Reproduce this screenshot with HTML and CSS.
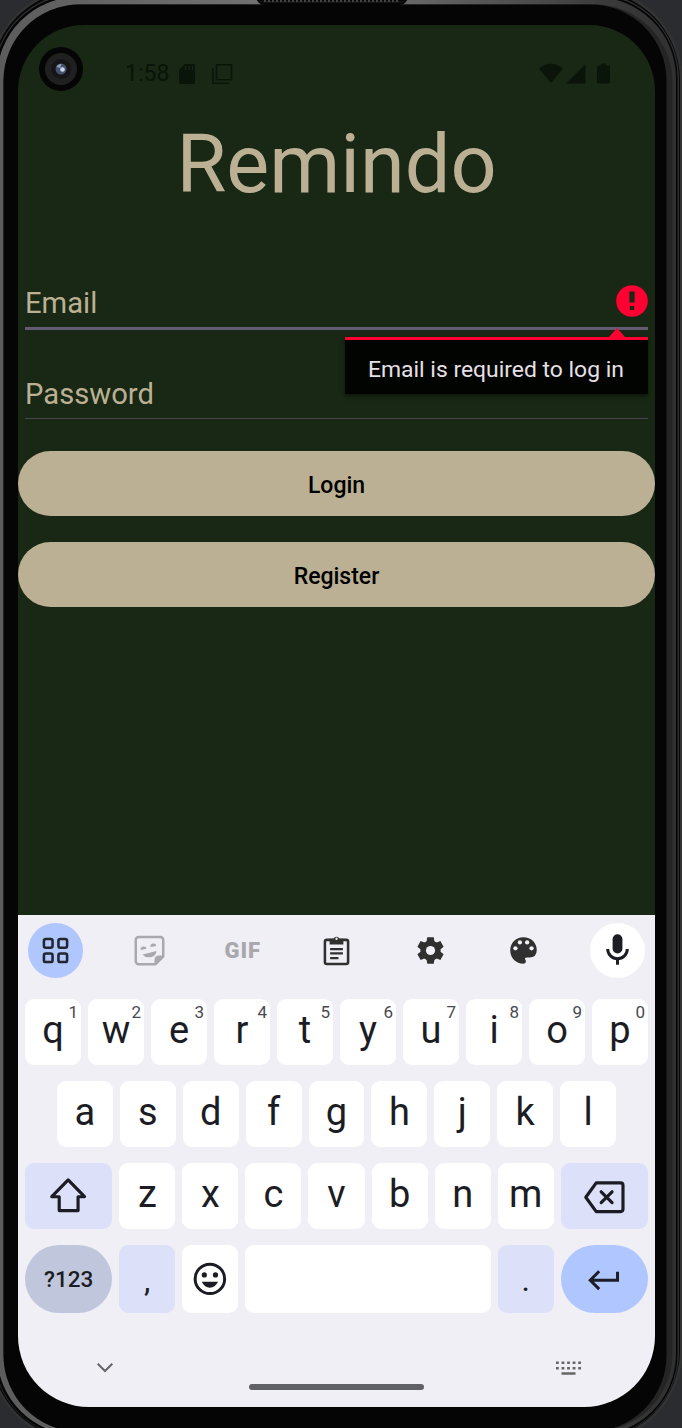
FILE: index.html
```html
<!DOCTYPE html>
<html lang="en">
<head>
<meta charset="utf-8">
<title>Remindo</title>
<link rel="stylesheet" href="styles.css">
</head>
<body>
<svg class="frame" viewBox="0 0 682 1428" aria-hidden="true">
  <defs>
    <linearGradient id="rim" x1="0" x2="1" y1="0" y2="0">
      <stop offset="0" stop-color="#5c5c5c"/><stop offset=".5" stop-color="#777"/><stop offset=".9" stop-color="#3a3a3a"/><stop offset="1" stop-color="#303030"/>
    </linearGradient>
  </defs>
  <rect x="-11" y="-13" width="693.5" height="1456" rx="93" fill="#333"/>
  <rect x="-9" y="-10" width="689" height="1450" rx="90" fill="#080808"/>
  <rect x="-7" y="-7" width="686" height="1445" rx="86" fill="#303030"/>
  <rect x="-5.500" y="-5" width="683" height="1442" rx="83" fill="#050505"/>
  <rect x="-3" y="-3" width="679" height="1438" rx="81" fill="url(#rim)"/>
  <rect x="3.500" y="4.500" width="669" height="1427" rx="78" fill="#252525"/>
  <rect x="3.500" y="4.500" width="663" height="1427" rx="76" fill="#050505"/>
  <path d="M258 0q2 4 8 4h132q6 0 8-4z" fill="#161616" stroke="#050505" stroke-width="2"/>
  <path d="M264 1h136" stroke="#444" stroke-width="2" stroke-dasharray="2 2"/>
</svg>
<main class="screen">
  <section class="app">
    <header class="status">
      <svg class="camera" viewBox="0 0 44 44"><circle cx="22" cy="22" r="22" fill="#050505"/><circle cx="22" cy="22" r="16" fill="#202021"/><circle cx="22" cy="22" r="10" fill="#151517"/><circle cx="22" cy="22" r="5.500" fill="#46506a"/><path d="M17.500 20a5 5 0 0 1 5-3l-1 4z" fill="#8e9db5"/><circle cx="23.500" cy="22.500" r="2.300" fill="#c8d8f0"/></svg>
      <span class="clock">1:58</span>
      <svg class="sd" viewBox="0 0 16 20"><path d="M6 0h8.500Q16 0 16 1.500v17q0 1.500-1.500 1.500h-13Q0 20 0 18.500V6z"/><path d="M6.500 2v4M10 2v4M13.500 2v4" stroke="#182814" stroke-width="1.300"/></svg>
      <svg class="windows" viewBox="0 0 21 20"><path d="M4.500.8h15v15h-15zM.8 4v15.200H17" fill="none" stroke="#0a1408" stroke-width="1.600"/></svg>
      <svg class="signals" viewBox="0 0 72 21"><path d="M0 5.500Q12-4 24 5.500L12 20zM27 20.500 46.500 1v19.500zM58 4q0-1.500 1.500-1.500H62V.500h5v2h2.500Q71 2.500 71 4v15q0 1.500-1.500 1.500h-10Q58 20.500 58 19z"/></svg>
    </header>
    <h1 class="title">Remindo</h1>
    <div class="field email">
      <span>Email</span>
      <svg class="error" viewBox="0 0 32 32"><circle cx="16" cy="16" r="15.800" fill="#ff0033"/><path d="M13.400 6.500h5.200v11h-5.200zM13.800 21h4.400v4h-4.400z" fill="#182814"/></svg>
      <div class="tooltip">Email is required to log in</div>
    </div>
    <div class="field password"><span>Password</span></div>
    <button class="action">Login</button>
    <button class="action">Register</button>
  </section>
  <section class="keyboard">
    <div class="toolbar">
      <div class="tool round blue"><svg viewBox="0 0 56 56" fill="none" stroke="#22272f" stroke-width="2.600"><rect x="16.200" y="16.300" width="8.800" height="8.800" rx="2"/><rect x="31" y="16.300" width="8.800" height="8.800" rx="2"/><rect x="16.200" y="31" width="8.800" height="8.800" rx="2"/><rect x="31" y="31" width="8.800" height="8.800" rx="2"/></svg></div>
      <div class="tool"><svg viewBox="0 0 56 56"><path d="M17 14.200h22a3 3 0 0 1 3 3V34l-8 8H17a3 3 0 0 1-3-3V17.200a3 3 0 0 1 3-3z" fill="none" stroke="#a9a8ad" stroke-width="2.500"/><path d="M42 33h-4q-5 0-5 5v4z" fill="#a9a8ad"/><path d="M19 27.500a3 3 0 0 1 6-1.200zM29 24.500a3 3 0 0 1 6-1.200zM21 32l14-3.500q0 5-5.500 6.300-6 .7-8.500-2.800z" fill="#a9a8ad"/></svg></div>
      <div class="tool gif">GIF</div>
      <div class="tool"><svg viewBox="0 0 56 56"><rect x="16.200" y="17.200" width="23.600" height="24.500" rx="2" fill="none" stroke="#303030" stroke-width="2.600"/><path d="M21 16h4a3.200 3.200 0 0 1 6 0h4v6H21z" fill="#303030"/><circle cx="28" cy="16" r="1.200" fill="#f0eff6"/><path d="M21.500 26.500h13M21.500 31h13M21.500 35.800h8.500" stroke="#303030" stroke-width="2.300"/></svg></div>
      <div class="tool"><svg viewBox="0 0 56 56"><g fill="#303030"><circle cx="28" cy="28" r="10.300"/><path d="M24.700 14.500h6.600l1 6h-8.600zM24.700 41.500h6.600l1-6h-8.600z"/><path d="M24.700 14.500h6.600l1 6h-8.600zM24.700 41.500h6.600l1-6h-8.600z" transform="rotate(60 28 28)"/><path d="M24.700 14.500h6.600l1 6h-8.600zM24.700 41.500h6.600l1-6h-8.600z" transform="rotate(120 28 28)"/></g><circle cx="28" cy="28" r="4.700" fill="#f0eff6"/></svg></div>
      <div class="tool"><svg viewBox="0 0 56 56"><path d="M28 14.500C20 14.500 14.500 20.500 14.500 28S20.500 41.500 28 41.500q2.500 0 2.500-2.500 0-.8-.7-1.700-1-2.300 1.700-2.300H34q7.500 0 7.500-7.500C41.500 20 35.500 14.500 28 14.500z" fill="#303030"/><g fill="#f0eff6"><circle cx="19.800" cy="25.800" r="2.200"/><circle cx="24.300" cy="19.800" r="2.200"/><circle cx="31.700" cy="19.800" r="2.200"/><circle cx="36.200" cy="25.800" r="2.200"/></g></svg></div>
      <div class="tool round white"><svg viewBox="0 0 56 56"><rect x="23" y="11.500" width="10" height="19.500" rx="5" fill="#1c1d24"/><path d="M18 26.500a10 9.800 0 0 0 20 0M28 36v6.500" fill="none" stroke="#1c1d24" stroke-width="3"/></svg></div>
    </div>
    <div class="row"><div class="key">q<sup>1</sup></div><div class="key">w<sup>2</sup></div><div class="key">e<sup>3</sup></div><div class="key">r<sup>4</sup></div><div class="key">t<sup>5</sup></div><div class="key">y<sup>6</sup></div><div class="key">u<sup>7</sup></div><div class="key">i<sup>8</sup></div><div class="key">o<sup>9</sup></div><div class="key">p<sup>0</sup></div></div>
    <div class="row middle"><div class="key">a</div><div class="key">s</div><div class="key">d</div><div class="key">f</div><div class="key">g</div><div class="key">h</div><div class="key">j</div><div class="key">k</div><div class="key">l</div></div>
    <div class="row">
      <div class="key wide pale"><svg viewBox="0 0 88 66" fill="none" stroke="#1c1d24" stroke-width="3.200" stroke-linejoin="round"><path d="M43.500 17 60 34h-6.500v14h-19V34H27z"/></svg></div>
      <div class="key">z</div><div class="key">x</div><div class="key">c</div><div class="key">v</div><div class="key">b</div><div class="key">n</div><div class="key">m</div>
      <div class="key wide pale"><svg viewBox="0 0 88 66" fill="none" stroke="#1c1d24" stroke-width="3.200" stroke-linejoin="round" stroke-linecap="round"><path d="M35.500 20H60q2.500 0 2.500 2.500v24q0 2.500-2.500 2.500H35.500L25 34.500zM40.500 29l11 11m0-11-11 11"/></svg></div>
    </div>
    <div class="row last">
      <div class="key wide symbols">?123</div>
      <div class="key pale mark">,</div>
      <div class="key"><svg viewBox="0 0 56 68"><circle cx="28" cy="34" r="14.800" fill="none" stroke="#1c1d24" stroke-width="3"/><circle cx="22.400" cy="30" r="2.600" fill="#1c1d24"/><circle cx="33.600" cy="30" r="2.600" fill="#1c1d24"/><path d="M19.800 37h16.400q-3 6-8.200 6t-8.200-6z" fill="#1c1d24"/></svg></div>
      <div class="key space"></div>
      <div class="key pale mark">.</div>
      <div class="key wide enter"><svg viewBox="0 0 88 68" fill="none" stroke="#1c1d24" stroke-width="3"><path d="M57 27v8.500H30M38.500 26.500l-9 9 9 9"/></svg></div>
    </div>
    <footer class="nav">
      <svg class="down" viewBox="0 0 16 10" fill="none" stroke="#666" stroke-width="2"><path d="M.700.700 8 8 15.300.700"/></svg>
      <i class="handle"></i>
      <svg class="switch" viewBox="0 0 25 14" fill="none" stroke="#666"><path d="M0 1.700h25M0 7.200h25" stroke-width="2.600" stroke-dasharray="2.800 2.750"/><path d="M5.500 12.500h14" stroke-width="2.400"/></svg>
    </footer>
  </section>
</main>
</body>
</html>
```

FILE: styles.css
```css
* { box-sizing: border-box; }
html { background: #2b2c30; }
body {
  margin: 0;
  width: 682px;
  height: 1428px;
  padding: 25px 27px 21px 18px;
  overflow: hidden;
  font-family: Roboto, "Liberation Sans", sans-serif;
}
svg { display: block; }
.frame { position: absolute; left: 0; top: 0; width: 682px; height: 1428px; z-index: -1; }
.screen {
  display: flex;
  flex-direction: column;
  height: 1382px;
  overflow: hidden;
  border-radius: 66px 66px 71px 71px;
}
.app { height: 890px; background: #182814; }

.status { display: flex; height: 92px; padding: 22px 44px 0 21px; align-items: flex-start; color: #0a1408; fill: #0a1408; }
.camera { width: 44px; height: 44px; }
.clock { margin-left: 42px; width: 54px; font-size: 23px; line-height: 54px; height: 50px; }
.sd { width: 16px; height: 20px; margin-top: 17px; }
.windows { width: 21px; height: 20px; margin: 17px 0 0 17px; }
.signals { width: 72px; height: 21px; margin: 16px 0 0 auto; }

.title { margin: 0; height: 152px; text-align: center; font-size: 81px; line-height: 95px; font-weight: 400; color: #bbb094; }
.field { position: relative; display: flex; justify-content: space-between; margin: 0 7px; color: #bbb094; font-size: 29.200px; line-height: 36px; }
.email { height: 61px; padding-top: 16px; border-bottom: 3px solid #625b71; }
.password { height: 89px; padding-top: 46px; margin-bottom: 32px; border-bottom: 1px solid #49454f; }
.error { width: 32px; height: 32px; }
.tooltip {
  position: absolute;
  z-index: 1;
  top: 68px;
  right: 0;
  width: 303px;
  height: 57px;
  padding: 14px 0 0 23px;
  border-top: 3px solid #ff0033;
  background: #020402;
  color: #e6e0e6;
  font-size: 22.900px;
  line-height: 32px;
  white-space: nowrap;
  box-shadow: 0 2px 4px rgba(0, 0, 0, .5);
}
.tooltip::before { content: ""; position: absolute; right: 22px; top: -12px; border: solid transparent; border-width: 0 9px 10px; border-bottom-color: #ff0033; }
.action { display: block; width: 100%; height: 65px; margin: 0 0 26px; padding: 4px 0 0; border: 0; border-radius: 33px; background: #bbb094; color: #000; font: 500 23px Roboto, sans-serif; }

.keyboard { display: flex; flex-direction: column; height: 492px; padding: 7px 7px 0; background: #f0eff6; }
.toolbar { display: flex; justify-content: space-between; padding: 1px 3px 0; height: 77px; }
.tool { width: 55px; height: 55px; border-radius: 50%; }
.blue { background: #b0c6ff; }
.white { background: #fff; }
.gif { font: 900 22px/56px Roboto, sans-serif; letter-spacing: 1px; text-align: center; color: #a9a8ad; }
.row { display: flex; gap: 7px; height: 66px; margin-bottom: 16px; }
.middle { padding: 0 32px; }
.key { position: relative; flex: 1 1 0; min-width: 0; height: 100%; border-radius: 9px; background: #fff; color: #1c1d24; text-align: center; font-size: 38px; line-height: 62px; }
.key sup { position: absolute; right: 3px; top: 3px; font-size: 17px; line-height: 20px; color: #48484e; }
.wide { flex: 0 0 87.300px; }
.pale { background: #dce1f9; }
.last { height: 68px; margin-bottom: 0; }
.last .key { flex: 0 0 55.800px; }
.last .wide { flex-basis: 87.300px; }
.last .space { flex: 1; }
.symbols { border-radius: 34px; background: #c0c6dc; font-weight: 500; line-height: 68px; }
.last .symbols { font-size: 22.500px; }
.mark { font-size: 32px; line-height: 70px; }
.enter { border-radius: 34px; background: #b0c6ff; }
.nav { display: flex; align-items: flex-start; height: 94px; padding: 50px 67px 0 72px; }
.down { width: 16px; height: 10px; }
.handle { width: 175px; height: 6px; margin: 21px 0 0 136px; border-radius: 3px; background: #606165; }
.switch { width: 25px; height: 14px; margin: -2px 0 0 auto; }
```
